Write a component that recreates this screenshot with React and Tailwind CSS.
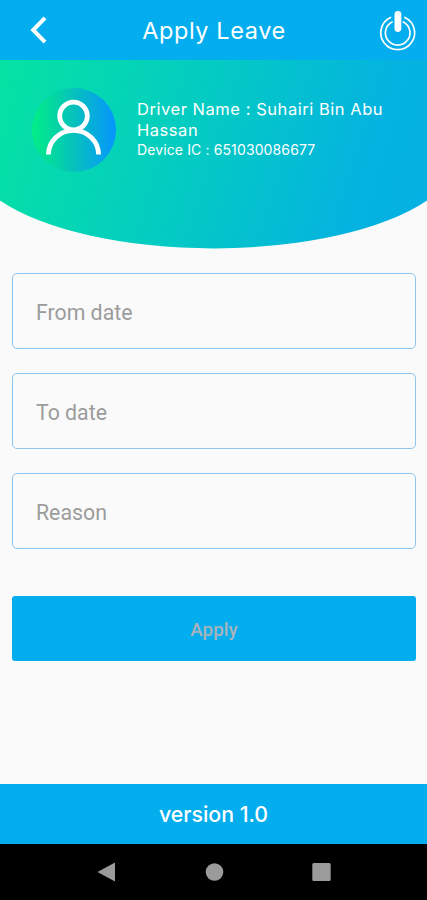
import React, { useState } from 'react';

const fields = [
  { name: 'from', label: 'From date' },
  { name: 'to', label: 'To date' },
  { name: 'reason', label: 'Reason' },
];

const PowerIcon = () => (
  <svg width="38" height="42" viewBox="0 0 38 42" fill="none" stroke="white" strokeLinecap="round">
    <path d="M11.5 8.5A16.9 16.9 0 1 0 25.9 8.5" strokeWidth="1.7" />
    <path d="M13 12.9A12.3 12.3 0 1 0 24.4 12.9" strokeWidth="1.7" />
    <path d="M18.9 5.3V19.5" strokeWidth="6.8" />
  </svg>
);

const Header = () => (
  <header className="flex h-[60px] shrink-0 items-center justify-between bg-[#04adee] pl-[30px] pr-[10px] text-white">
    <button aria-label="Back" className="w-[38px]">
      <svg width="17" height="28" viewBox="0 0 17 28" fill="none" stroke="white" strokeWidth="4">
        <path d="M15 1.8L3.2 14L15 26.2" />
      </svg>
    </button>
    <h1 className="ml-[-19px] whitespace-nowrap pt-0.5 text-[23.5px] leading-7 tracking-[0.6px]">Apply Leave</h1>
    <button aria-label="Log out">
      <PowerIcon />
    </button>
  </header>
);

const DriverCard = () => (
  <section className="flex h-[189px] shrink-0 items-start bg-[linear-gradient(107deg,#05e3a3_0%,#04c9c5_48%,#04b3df_82%,#04b0e2_100%)] pl-8 pt-[28px] text-white [clip-path:path('M0_0H427V140.5A245_94_0_0_1_0_140.5Z')]">
    <div className="flex size-[84px] shrink-0 items-center justify-center rounded-full bg-[linear-gradient(90deg,#02ee85_0%,#06c1bd_50%,#0695ff_100%)]">
      <svg width="84" height="84" viewBox="0 0 84 84" fill="none" stroke="white" strokeWidth="4.8">
        <circle cx="41.5" cy="28" r="13.8" />
        <path d="M16.4 66.6A25.1 24.2 0 0 1 66.6 66.6" />
      </svg>
    </div>
    <div className="ml-[21px] pt-[11px]">
      <p className="whitespace-nowrap text-[16.5px] leading-[20.5px] tracking-[0.54px]">
        Driver Name : Suhairi Bin Abu
        <br />
        Hassan
      </p>
      <p className="whitespace-nowrap text-[14px] leading-5 tracking-[0.12px]">Device IC : 651030086677</p>
    </div>
  </section>
);

const NavBar = () => (
  <nav className="flex h-14 shrink-0 items-center justify-center bg-black">
    <svg width="240" height="24" viewBox="0 0 240 24" fill="#9b9b9b">
      <path d="M21 2.5V21.5L3.5 12Z" />
      <circle cx="120.5" cy="12" r="8.8" />
      <rect x="218.3" y="3" width="18.4" height="18" rx="1.5" />
    </svg>
  </nav>
);

const App = () => {
  const [form, setForm] = useState({ from: '', to: '', reason: '' });

  const handleChange = (e) => {
    setForm({ ...form, [e.target.name]: e.target.value });
  };

  return (
    <div className="flex h-[900px] w-[427px] flex-col overflow-hidden bg-[#fafafa] font-['Inter',sans-serif]">
      <Header />
      <DriverCard />

      <form className="flex flex-1 flex-col px-3 pt-6 font-['Roboto',sans-serif]" onSubmit={(e) => e.preventDefault()}>
        <div className="flex flex-col gap-6">
          {fields.map((field) => (
            <input
              key={field.name}
              name={field.name}
              placeholder={field.label}
              value={form[field.name]}
              onChange={handleChange}
              className="h-[76px] w-[404px] rounded-[5px] border border-[#8ec5ee] px-[23px] pt-0.5 text-[21.3px] text-gray-700 outline-none placeholder:text-[#9c9c9c]"
            />
          ))}
        </div>
        <button className="mt-[47px] h-[65px] w-[404px] rounded-[3px] bg-[#04adee] pt-[3px] text-[18.8px] font-medium text-[#a9b4ba]">
          Apply
        </button>
      </form>

      <footer className="flex h-[60px] shrink-0 items-center justify-center bg-[#04adee] pt-0.5 text-[21.3px] font-medium text-white">
        version 1.0
      </footer>
      <NavBar />
    </div>
  );
};

export default App;
